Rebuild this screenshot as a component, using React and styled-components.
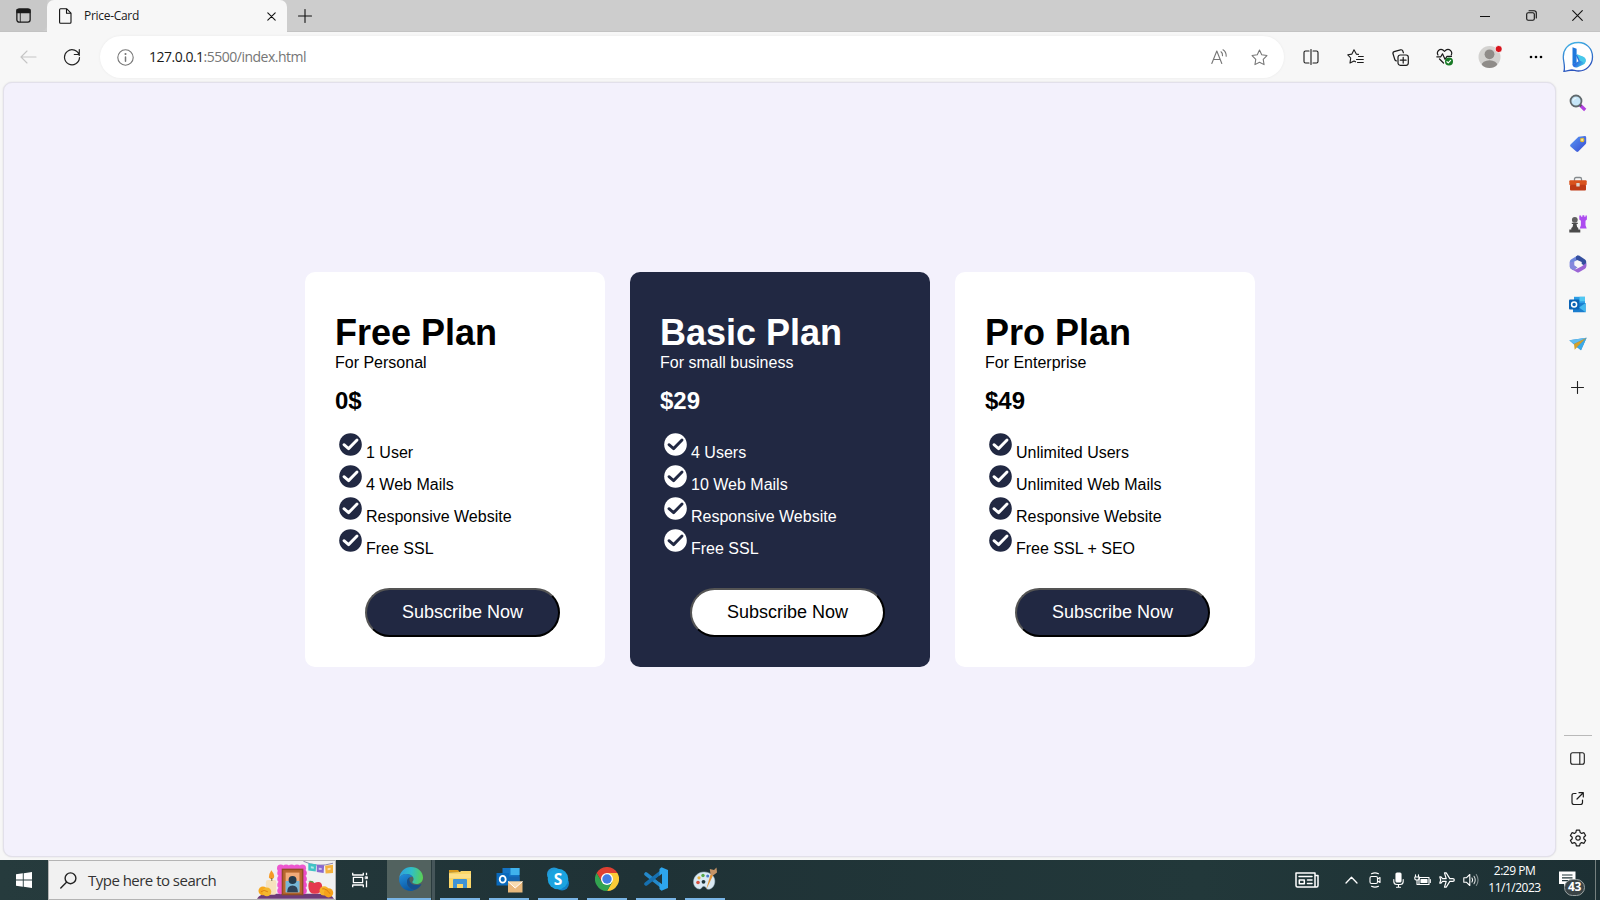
import React from 'react';
import styled, { createGlobalStyle } from 'styled-components';

const NAVY = '#212842';
const UI = '"Open Sans", "Noto Sans", sans-serif';

const GlobalStyle = createGlobalStyle`
  * { box-sizing: border-box; margin: 0; padding: 0; }
  body { overflow: hidden; background: #f7f7f7; font-family: "Liberation Sans", Arial, sans-serif; }
  svg { display: block; flex: none; }
`;

const Screen = styled.div`
  width: 1600px;
  height: 900px;
  display: flex;
  flex-direction: column;
  background: #f7f7f7;
`;

/* ---------- browser chrome ---------- */
const TabStrip = styled.header`
  height: 32px;
  display: flex;
  background: #cdcdcd;
  border-bottom: 1px solid #c3c3c3;
`;
const Workspace = styled.div`
  width: 47px;
  display: flex;
  align-items: center;
  justify-content: center;
  background: #c8c8c8;
  border-bottom-right-radius: 6px;
`;
const Tab = styled.div`
  width: 240px;
  height: 32px;
  padding: 0 10px 0 12px;
  display: flex;
  align-items: center;
  background: #f7f7f7;
  border-radius: 7px 7px 0 0;
  font: 12px/16px ${UI};
  color: #1a1a1a;
`;
const TabTitle = styled.span`
  flex: 1;
  margin-left: 12px;
  letter-spacing: -0.3px;
`;
const NewTab = styled.div`
  width: 35px;
  display: flex;
  align-items: center;
  justify-content: center;
`;
const WindowControls = styled.div`
  margin-left: auto;
  display: flex;
`;
const Slot = styled.div`
  width: ${(p) => p.$w || 24}px;
  flex: none;
  display: flex;
  align-items: center;
  justify-content: center;
`;
const Toolbar = styled.nav`
  height: 50px;
  padding-left: 6px;
  display: flex;
  align-items: center;
`;
const AddressBar = styled.div`
  width: 1184px;
  height: 42px;
  margin: 0 5px 0 6px;
  padding: 0 5px 0 14px;
  display: flex;
  align-items: center;
  background: #fff;
  border-radius: 21px;
  box-shadow: 0 0 3px rgba(0, 0, 0, 0.06);
`;
const Url = styled.span`
  flex: 1;
  margin-left: 12px;
  font: 14px/20px ${UI};
  letter-spacing: -0.5px;
  color: #767676;
  b { font-weight: 400; color: #1a1a1a; }
`;
const Main = styled.div`
  height: 778px;
  display: flex;
`;
const Page = styled.main`
  width: 1553px;
  height: 775px;
  margin-left: 3px;
  padding-left: 1px;
  display: flex;
  align-items: center;
  justify-content: center;
  gap: 25px;
  background: #f3f1fc;
  border: 1px solid #e2e0ea;
  border-radius: 9px;
  box-shadow: 0 0 2px rgba(0, 0, 0, 0.12);
`;
const Sidebar = styled.aside`
  width: 44px;
  padding: 1px 1px 2px 0;
  display: flex;
  flex-direction: column;
  align-items: center;
`;
const SideItem = styled.div`
  height: ${(p) => p.$h || 40}px;
  display: flex;
  align-items: center;
`;
const SideSpacer = styled.div`
  flex: 1;
`;
const SideRule = styled.div`
  width: 28px;
  height: 1px;
  margin-bottom: 2px;
  background: #b9b9b9;
`;

/* ---------- pricing cards ---------- */
const Card = styled.section`
  width: 300px;
  height: 395px;
  padding: 40px 30px 30px;
  border-radius: 10px;
  background: ${(p) => (p.$dark ? NAVY : '#fff')};
  color: ${(p) => (p.$dark ? '#fff' : '#000')};
`;
const PlanName = styled.h1`
  font-size: 36px;
  line-height: 42px;
  white-space: nowrap;
`;
const Audience = styled.p`
  font-size: 16px;
  line-height: 18px;
`;
const Price = styled.h2`
  margin: 15px 0;
  font-size: 24px;
  line-height: 28px;
`;
const Features = styled.ul`
  list-style: none;
`;
const Feature = styled.li`
  height: 32px;
  padding-left: 4px;
  display: flex;
  gap: 4px;
  font-size: 16px;
  line-height: 18px;
  span { padding-top: 14px; }
  svg { margin-top: 3px; }
`;
const Subscribe = styled.button`
  display: block;
  width: 195px;
  height: 49px;
  margin: 30px 0 0 30px;
  border: 2px outset #000;
  border-radius: 25px;
  background: ${(p) => (p.$dark ? '#fff' : NAVY)};
  color: ${(p) => (p.$dark ? '#000' : '#fff')};
  font: 18px "Liberation Sans", Arial, sans-serif;
`;

/* ---------- taskbar ---------- */
const Taskbar = styled.footer`
  height: 40px;
  display: flex;
  background: linear-gradient(90deg, #263b3d, #1f3236 40%, #22383a 75%, #1d3034);
`;
const SearchBox = styled.div`
  width: 288px;
  padding-left: 11px;
  display: flex;
  align-items: center;
  background: #f1f1f1;
  border: 1px solid #b4b4b4;
  font: 15px/20px ${UI};
  letter-spacing: -0.52px;
  color: #333;
`;
const SearchText = styled.span`
  flex: 1;
  margin-left: 11px;
`;
const TaskView = styled.div`
  width: 51px;
  padding-left: 16px;
  display: flex;
  align-items: center;
`;
const TaskbarApp = styled.div`
  width: ${(p) => (p.$active ? 44 : 40)}px;
  margin-right: ${(p) => (p.$active ? 0 : 9)}px;
  padding-left: ${(p) => (p.$active ? 3 : 0)}px;
  display: flex;
  align-items: center;
  justify-content: center;
  background: ${(p) => (p.$active ? '#52625f' : 'transparent')};
  border-bottom: 2px solid #79b5e6;
`;
const Stacked = styled.div`
  width: 4px;
  margin-right: 5px;
  background: #46565a;
  border-left: 1px solid #2a3b3e;
`;
const Tray = styled.div`
  margin-left: auto;
  display: flex;
`;
const TrayGap = styled.div`
  width: 15px;
`;
const Clock = styled.div`
  width: 64px;
  padding: 2px 1px 0 0;
  text-align: center;
  font: 12px/17px ${UI};
  letter-spacing: -0.5px;
  color: #fff;
  white-space: nowrap;
`;
const Notice = styled.div`
  position: relative;
  width: 48px;
  padding: 11px 0 0 12px;
`;
const Badge = styled.span`
  position: absolute;
  left: 17px;
  top: 19px;
  width: 21px;
  height: 17px;
  border: 1px solid #9aa3a3;
  border-radius: 9px;
  background: #3b4446;
  color: #fff;
  font: 700 12px/14px ${UI};
  letter-spacing: -0.4px;
  text-align: center;
`;
const ShowDesktop = styled.div`
  width: 5px;
  border-left: 1px solid #75807f;
`;

/* ---------- drawings ---------- */
const Icon = ({ w = 16, h = w, box, c = '#1b1b1b', sw = 1.1, children }) => (
  <svg width={w} height={h} viewBox={box || `0 0 ${w} ${h}`} fill="none" stroke={c} strokeWidth={sw}
    strokeLinecap="round" strokeLinejoin="round">{children}</svg>
);

const CheckIcon = ({ dark }) => (
  <svg width="23" height="23" viewBox="0 0 24 24">
    <circle cx="12" cy="12" r="11.8" fill={dark ? '#fff' : NAVY} />
    <path d="M5.2 12.2l4.8 4.1 8.800-8.900" fill="none" stroke={dark ? NAVY : '#fff'} strokeWidth="3" strokeLinecap="round" strokeLinejoin="round" />
  </svg>
);

const BingIcon = () => (
  <svg width="32" height="32" viewBox="0 0 32 32">
    <defs>
      <linearGradient id="ring" x1="0" y1="0" x2="0.3" y2="1"><stop stopColor="#43b8e8" /><stop offset="1" stopColor="#2a52bd" /></linearGradient>
      <linearGradient id="bee" x1="0" y1="0" x2="1" y2="0.6"><stop stopColor="#1f7fe0" /><stop offset=".5" stopColor="#2b6ee0" /><stop offset="1" stopColor="#43c9e8" /></linearGradient>
    </defs>
    <path d="M2 30.300C3 27 2.300 23.500 1.700 20C-.4 9 6 1.500 16.500 1.500c8 0 14 6.300 14 14.300S24.500 30 16.500 30c-2.700 0-4.600-.9-6.500-1C7 29 5 30.300 2 30.300Z" fill="#fff" stroke="url(#ring)" strokeWidth="1.300" />
    <path d="M10.500 6.200l4.100 1.600v13.800l-4.100 2.400Z" fill="#1e78dc" />
    <path d="M10.500 23.500l6-3.300-2-4.500-1-2.200 7.500 2.600c4.300 2 3 6.200.5 7.500l-6.500 2.800c-2 .7-4.500-.8-4.500-2.900Z" fill="url(#bee)" />
    <path d="M14.600 13l6.800 2.800c3.300 1.800 2.600 5 .6 6.900-.7-1.700-2.400-2.300-4.200-3.200Z" fill="#48c8ea" />
  </svg>
);

const MagnifierColor = () => (
  <svg width="18" height="18" viewBox="0 0 18 18">
    <path d="M11 11l5.200 5" stroke="#b13fe0" strokeWidth="3.200" strokeLinecap="butt" />
    <path d="M10 10l2.300 2.200" stroke="#555" strokeWidth="2" />
    <circle cx="7" cy="7" r="5.500" fill="#c6e6f8" stroke="#60696d" strokeWidth="1.800" />
    <path d="M4.300 6.500c.4-1.500 1.500-2.300 3-2.300" stroke="#fff" fill="none" />
  </svg>
);
const TagIcon = () => (
  <svg width="18" height="18" viewBox="0 0 18 18">
    <defs><linearGradient id="tag" x1="0" y1="0" x2="1" y2="1"><stop stopColor="#5b9bf5" /><stop offset="1" stopColor="#3648d0" /></linearGradient></defs>
    <path d="M9.500 1.800 15.800 1q1.400 0 1.400 1.400v5.200q0 .8-.5 1.300l-7.400 7.700q-1 .9-2 0L1.500 11.500q-.9-1 0-2Z" fill="url(#tag)" />
    <circle cx="13.200" cy="5" r="1.700" fill="#f4e5a0" stroke="#e5ba28" strokeWidth="1.100" />
  </svg>
);
const ToolboxIcon = () => (
  <svg width="18" height="16" viewBox="0 0 18 16">
    <path d="M5.500 5V3q0-1.500 1.500-1.500h4q1.500 0 1.500 1.500v2" fill="none" stroke="#858b8e" strokeWidth="1.300" />
    <rect x=".3" y="4.300" width="17.400" height="5" rx="1" fill="#d9531e" />
    <rect x="1" y="8.700" width="16" height="5.800" rx="1" fill="#bf3b16" />
    <rect x="7.300" y="7" width="3.400" height="3.600" rx=".5" fill="#dcd6d0" />
  </svg>
);
const ChessIcon = () => (
  <svg width="18" height="18" viewBox="0 0 18 18">
    <path d="M10.300.5h1.800v1.300h1.300V.2h1.900v1.600h1.200V.500h1.400v4l-1.400 1.200v4.600l1.200 3.200h-7l1.200-3.200V5.700l-1.600-1.200Z" fill="#ad4cf0" />
    <circle cx="5.800" cy="4.800" r="2.900" fill="#606060" />
    <path d="M2.800 7.700h6v1.200H7.500q.2 3.200 1.800 4.200v1.500h2v2.900H.3v-2.900h2v-1.500Q4 11.900 4.200 8.900H2.800Z" fill="#4a4a4a" />
  </svg>
);
const M365Icon = () => (
  <svg width="18" height="18" viewBox="0 0 18 18">
    <path d="M8.500.5 2 4.400Q.8 5.200.8 6.600v5.200q0 1.400 1.200 2l2.600 1.400V7L9 4.800V.6Z" fill="#6f87dc" />
    <path d="M8.500.5 10 .6l6 3.800q1.200.8 1.200 2.200v4.800l-4.500-2.300V7L7 4.500V1.400Z" fill="#344f9e" />
    <path d="M2 13.800l6 3.400q1 .5 2 0l6-3.500q1.200-.7 1.200-2.100V8l-4.300 3.200L7 14.300Z" fill="#9b65d5" />
    <path d="M.8 7v4.600q0 1.500 1.200 2.200l2.600 1.400 3.900-2.600-3.200-2.300V7Z" fill="#8487dc" />
    <path d="M9 5.900l2.900 1.500v3.200L9 12.300l-2.900-1.700V7.400Z" fill="#f7f7f7" />
  </svg>
);
const OutlookSmall = () => (
  <svg width="17" height="17" viewBox="0 0 17 17">
    <rect x="5" y=".8" width="11" height="9" fill="#2b9de5" /><rect x="10.500" y=".8" width="5.500" height="4.500" fill="#50c8f2" />
    <path d="M4 7.500 16.600 7v9.200H4Z" fill="#1a7dce" /><path d="M16.600 7v9.200L10 11.500Z" fill="#43b9ee" />
    <rect x="0" y="3.500" width="10.300" height="10" rx="1" fill="#0b63b5" />
    <circle cx="5.100" cy="8.500" r="2.500" fill="none" stroke="#fff" strokeWidth="1.500" />
  </svg>
);
const PlaneColor = () => (
  <svg width="18" height="14" viewBox="0 0 18 14">
    <path d="M.3 3.200 17.600.8 12 13.200 8.300 10.500Z" fill="#2e88cc" />
    <path d="M.3 3.200 17.600.8 5 7Z" fill="#62bdf0" />
    <path d="M5 7 17.600.8 8.300 10 5.700 12.700Z" fill="#d5a02a" />
    <path d="M8.300 10 17.600.8 12 13.200Z" fill="#3caae8" />
  </svg>
);

const DayArt = () => (
  <svg width="78" height="38" viewBox="0 0 79 38">
    <path d="M0 38q3-5 11-5h55q9 0 12 5Z" fill="#6d3b78" />
    <path d="M47 0q14 7 30 2" stroke="#8f86ae" fill="none" />
    <path d="M52 2l8 1-.5 7.500-7.500-1Z" fill="#41c3c5" /><path d="M60.500 3.500l7.500.5-.5 8-7-1Z" fill="#8a69ce" /><path d="M69 4.500l8-1v8.500l-7.500.5Z" fill="#f5b23e" />
    <path d="M54.500 5l3 .5v2l-3-.5ZM62.500 6.500l3 .3v2l-3-.3ZM71.500 7l3-.3v2l-3 .3Z" fill="#fff" opacity=".6" />
    {[24, 29.500, 35, 40.500, 46].map((x) => <circle key={x} cx={x} cy="7" r="3.700" fill="#ed57cf" />)}
    {[12, 18, 24, 30].map((y) => <g key={y}><circle cx="24" cy={y} r="3.500" fill="#ef58d0" /><circle cx="47" cy={y} r="3.500" fill="#e94ac5" /></g>)}
    <rect x="25" y="7.500" width="22" height="27" fill="#914e24" /><rect x="26.500" y="9" width="19" height="24" fill="#b8682f" />
    <rect x="29" y="11.500" width="14" height="20" fill="#f2aa79" /><path d="M29 20h14v11.500H29Z" fill="#77b7d8" />
    <circle cx="36" cy="19" r="4" fill="#253b4c" /><path d="M30.500 31.500q0-7 5.500-7t5.500 7Z" fill="#2e4358" />
    <path d="M14.500 9q4 5 2.500 8-2.500 2.500-5-.5Q12 12.500 14.500 9Z" fill="#f69b26" />
    <rect x="9" y="19" width="10.500" height="15" rx="2" fill="#f6e2bd" /><path d="M15 17v3" stroke="#664" />
    <circle cx="6" cy="30" r="4.500" fill="#f6a81d" /><circle cx="10" cy="31" r="4.500" fill="#f4b72d" /><path d="M4 31q3-3 7 0" stroke="#dc8112" fill="none" />
    <path d="M58 22q-6-4-6 3 0 8 6.500 8 7.500 0 7.500-7 0-7-8-4Z" fill="#e4394d" /><path d="M58 22q-5-1-6-2 5-1 6 2" fill="#5b9b42" />
    <circle cx="68" cy="30" r="4.700" fill="#f6b32a" /><circle cx="72.500" cy="32" r="4.700" fill="#f6a11b" /><path d="M66 28q4-1 8 5" stroke="#d87c10" fill="none" />
  </svg>
);

const EdgeIcon = () => (
  <svg width="24" height="24" viewBox="0 0 24 24">
    <defs>
      <linearGradient id="eTop" x1="0" y1=".4" x2="1" y2=".5"><stop stopColor="#2f9fdf" /><stop offset=".5" stopColor="#30bfc7" /><stop offset="1" stopColor="#5ad153" /></linearGradient>
      <linearGradient id="eLow" x1="0" y1="0" x2="0.4" y2="1"><stop stopColor="#2390dd" /><stop offset="1" stopColor="#0c59a4" /></linearGradient>
    </defs>
    <path d="M.2 11C1 4.500 6 0 12 0c7 0 12 5 12 10.500 0 4.200-3 6.500-6.300 6.500-3.200 0-4.300-1.100-4.300-1.900 0-.7 1.200-1.200 1.200-3.100C14.600 9 11 6.900 7.500 6.900 4.300 6.900 1.500 8.500.2 11Z" fill="url(#eTop)" />
    <path d="M.1 12C.5 9 3.500 6.900 7.300 6.900c3.200 0 5.700 1.400 6.700 3.100-1.400-.6-6 .3-6 5.200 0 4.400 4.500 7.300 7.500 7.700-1.100.7-2.300 1.100-3.500 1.100C5 24 0 18.500.1 12Z" fill="url(#eLow)" />
    <path d="M10.800 10c-2 1-2.900 3.300-2.800 5.200.2 4 4.300 7.600 7.500 7.700 2.800-.8 5.200-2.700 6.700-5.200.3-.5 0-.7-.4-.5-4.500 2-9.500.6-11-2.700-.6-1.500-.5-3.300 0-4.500Z" fill="#164f8e" />
  </svg>
);
const FolderIcon = () => (
  <svg width="22" height="20" viewBox="0 0 22 20">
    <path d="M0 1h9l2 2.500H0Z" fill="#d99a1c" /><path d="M0 3.500 11 3l1-1h10v17H0Z" fill="#fbd668" /><path d="M0 5h22v4H0Z" fill="#fde087" />
    <path d="M4 19v-8q0-1 1-1h12q1 0 1 1v8h-4v-4H8v4Z" fill="#3f93d5" />
  </svg>
);
const OutlookBig = () => (
  <svg width="27" height="27" viewBox="-.5 -1.500 27 27">
    <rect x="6" y=".5" width="17" height="15" fill="#1474c5" /><rect x="14" y=".5" width="9" height="7" fill="#40b3ed" /><path d="M6 9h17v7H6Z" fill="#1565b0" />
    <rect x="0" y="5.500" width="12.500" height="12.500" fill="#0969bc" /><ellipse cx="6.200" cy="11.800" rx="3" ry="3.400" fill="none" stroke="#fff" strokeWidth="1.800" />
    <path d="M11.500 14H26v11H11.500Z" fill="#e9b87c" /><path d="M11.500 14 18.700 20.500 26 14Z" fill="#f7dbb0" /><path d="M11.500 14l7.200 6.500L26 14" fill="none" stroke="#fff" />
  </svg>
);
const SkypeIcon = () => (
  <svg width="24" height="24" viewBox="0 0 24 24">
    <circle cx="8" cy="7.500" r="7" fill="#2298d6" /><circle cx="16" cy="16.500" r="7" fill="#1282c7" /><circle cx="12" cy="12" r="10.300" fill="#1ba3df" />
    <text x="11.900" y="17.500" textAnchor="middle" fill="#fff" fontFamily="Open Sans, sans-serif" fontSize="15.500" fontWeight="700">S</text>
  </svg>
);
const ChromeIcon = () => (
  <svg width="24" height="24" viewBox="0 0 24 24">
    <path d="M1.600 6A12 12 0 0 1 22.400 6H12L6.800 15Z" fill="#de4032" />
    <path d="M22.400 6A12 12 0 0 1 12 24l5.200-9L12 6Z" fill="#fbcb36" />
    <path d="M1.600 6A12 12 0 0 0 12 24l5.200-9H6.800Z" fill="#32a350" />
    <circle cx="12" cy="12" r="6" fill="#fff" /><circle cx="12" cy="12" r="4.700" fill="#417de5" />
  </svg>
);
const CodeIcon = () => (
  <svg width="24" height="24" viewBox="0 0 24 24">
    <path d="M2 7 18 19.500" stroke="#2489ca" strokeWidth="3.600" strokeLinecap="round" /><path d="M2 17 18 4.500" stroke="#1670b0" strokeWidth="3.600" strokeLinecap="round" />
    <path d="M17.500.3 24 3v18l-6.500 2.700L15.500 22V2Z" fill="#2da5ed" /><path d="M18 6.700v10.600L11.300 12Z" fill="#20343a" />
  </svg>
);
const PaintIcon = () => (
  <svg width="24" height="24" viewBox="0 0 24 24">
    <path d="M11 5C5 5 .5 9.500.5 15c0 4 3 7 6 7 2.500 0 2-2.800 4.500-2.800 2 0 2.200 3.500 5 3 3.500-.5 6-4.300 5.800-8.500C21.500 8.500 17 5 11 5Z" fill="#d9e9f3" stroke="#a7bfce" strokeWidth=".5" />
    <circle cx="10.500" cy="14.800" r="1.900" fill="#1f3438" /><circle cx="5" cy="15.500" r="1.800" fill="#d65142" /><circle cx="6" cy="10.800" r="1.600" fill="#e8b13d" /><circle cx="10" cy="8.500" r="1.700" fill="#56a84b" /><circle cx="14.700" cy="9" r="1.500" fill="#4778ca" />
    <path d="M13 23 17.500 7.500l2.500 1Z" fill="#e39336" /><path d="M17.500 7.500 16.800 2l4.200 1L23.500.5l.5 5-4 3Z" fill="#c49366" />
  </svg>
);

const plans = [
  { name: 'Free Plan', audience: 'For Personal', price: '0$', features: ['1 User', '4 Web Mails', 'Responsive Website', 'Free SSL'] },
  { name: 'Basic Plan', audience: 'For small business', price: '$29', dark: true, features: ['4 Users', '10 Web Mails', 'Responsive Website', 'Free SSL'] },
  { name: 'Pro Plan', audience: 'For Enterprise', price: '$49', features: ['Unlimited Users', 'Unlimited Web Mails', 'Responsive Website', 'Free SSL + SEO'] },
];

const PlanCard = ({ plan }) => (
  <Card $dark={plan.dark}>
    <PlanName>{plan.name}</PlanName>
    <Audience>{plan.audience}</Audience>
    <Price>{plan.price}</Price>
    <Features>
      {plan.features.map((f) => <Feature key={f}><CheckIcon dark={plan.dark} /><span>{f}</span></Feature>)}
    </Features>
    <Subscribe $dark={plan.dark}>Subscribe Now</Subscribe>
  </Card>
);

const Tabs = () => (
  <TabStrip>
    <Workspace>
      <Icon w={15} box="0 0 14 14" sw={1.200}><rect x=".8" y=".8" width="12.400" height="12.400" rx="2.200" /><path d="M1 1.500h12v2.700H1Z" fill="#1b1b1b" /><path d="M4 5v8" strokeWidth=".8" /></Icon>
    </Workspace>
    <Tab>
      <Icon w={13} h={16} c="#111"><path d="M1.500.7h6l4.500 4.500v9q0 1-1 1h-9.500q-.9 0-.9-1V1.700q0-1 .9-1ZM7.500.8v4.400H12" /></Icon>
      <TabTitle>Price-Card</TabTitle>
      <Slot $w={12}><Icon w={9} c="#111"><path d="M.8.800l7.400 7.400M8.200.8.800 8.200" /></Icon></Slot>
    </Tab>
    <NewTab><Icon w={14} c="#111"><path d="M7 .5v13M.5 7h13" /></Icon></NewTab>
    <WindowControls>
      <Slot $w={46}><Icon w={10} c="#111" sw={1}><path d="M0 5.500h10" /></Icon></Slot>
      <Slot $w={46}><Icon w={11} c="#111"><rect x=".7" y="2.700" width="7.600" height="7.600" rx="1.500" /><path d="M3 .7h5q2.300 0 2.300 2.300v5" /></Icon></Slot>
      <Slot $w={46}><Icon w={11} c="#111"><path d="M.7.700l9.600 9.600M10.300.7.700 10.300" /></Icon></Slot>
    </WindowControls>
  </TabStrip>
);

const STAR = 'M8 1l2.100 4.500 4.900.7-3.500 3.500.8 5L8 12.400l-4.300 2.300.8-5L1 6.200l4.900-.7Z';

const Tools = () => (
  <Toolbar>
    <Slot $w={44}><Icon w={17} h={14} c="#c5c5c5"><path d="M16 7H1M7 1 1 7l6 6" /></Icon></Slot>
    <Slot $w={44}><Icon w={18} c="#222" sw={1.200}><path d="M16.300 7.500A7.500 7.500 0 1 0 16.500 9.500M16.300 1.500v5h-5" /></Icon></Slot>
    <AddressBar>
      <Slot $w={23}><Icon w={17} c="#767676"><circle cx="8.500" cy="8.500" r="7.700" /><path d="M8.500 8v4.200" strokeWidth="1.500" /><circle cx="8.500" cy="5" r=".5" fill="#767676" /></Icon></Slot>
      <Url><b>127.0.0.1</b>:5500/index.html</Url>
      <Slot $w={40}><Icon w={16} c="#767676"><path d="M.8 14.500 5.800 2l5 12.500M2.500 10.500h6.600M10 2.800q1.800 1.200 1.500 4M12 .8q3.300 2 3.200 6.500" /></Icon></Slot>
      <Slot $w={40}><Icon w={17} box="0 0 16 16" c="#767676" sw={1}><path d={STAR} /></Icon></Slot>
    </AddressBar>
    <Slot $w={44}><Icon w={16}><path d="M6 2H2.500Q1 2 1 3.500v9Q1 14 2.500 14H6M10 2h3.500Q15 2 15 3.500v9q0 1.500-1.500 1.500H10M8 .5v15" /></Icon></Slot>
    <Slot $w={45}><Icon w={17} h={16}><path d="M11.500 5.400 9.300 5.100 7 .8 4.900 5.100.8 5.800 3.700 9l-.7 5 4-2 1.500.8M11.500 7.500h4.800M9.500 10.500h6.800M10.500 13.500h5.800" /></Icon></Slot>
    <Slot $w={44}><Icon w={17} sw={1.200}><rect x="6" y="6" width="10.300" height="10.300" rx="2.200" /><path d="M11.200 8.300v5.800M8.300 11.200h5.800M4.300 11.800q-1.200-.2-1.500-1.300L1 4.800q-.4-1.600 1.100-2.200L8.500.8q1.500-.3 2.200 1l.7 2" /></Icon></Slot>
    <Slot $w={45}><svg width="18" height="18" viewBox="0 0 18 18" fill="none" stroke="#1b1b1b" strokeWidth="1.200" strokeLinecap="round" strokeLinejoin="round"><path d="M2 7Q.5 4.500 2.500 2.500q3-2.500 6 .8 3-3.300 6-.8 2 1.800.8 4.500M.8 8.800h4l1.700-3 2.500 5.500 2-3h4.500M3.500 11l4 4" /><circle cx="13" cy="13.500" r="4" fill="#187a26" stroke="none" /><path d="M11 13.700l1.300 1.200 2.300-2.500" stroke="#fff" /></svg></Slot>
    <Slot $w={46}><svg width="24" height="24" viewBox="0 0 24 24"><defs><clipPath id="av"><circle cx="11.500" cy="12" r="11" /></clipPath></defs><circle cx="11.500" cy="12" r="11" fill="#d3d2d0" /><g clipPath="url(#av)"><circle cx="11.500" cy="9.300" r="4.900" fill="#8f8c89" /><ellipse cx="11.500" cy="20.500" rx="8" ry="5.200" fill="#8f8c89" /></g><circle cx="20.700" cy="4" r="3.600" fill="#d8131c" stroke="#f7f7f7" strokeWidth=".9" /></svg></Slot>
    <Slot $w={46}><svg width="14" height="4"><circle cx="2" cy="2" r="1.300" /><circle cx="7" cy="2" r="1.300" /><circle cx="12" cy="2" r="1.300" /></svg></Slot>
    <Slot $w={38}><BingIcon /></Slot>
  </Toolbar>
);

export default function App() {
  return (
    <Screen>
      <GlobalStyle />
      <Tabs />
      <Tools />
      <Main>
        <Page>{plans.map((p) => <PlanCard key={p.name} plan={p} />)}</Page>
        <Sidebar>
          <SideItem><MagnifierColor /></SideItem>
          <SideItem $h={41}><TagIcon /></SideItem>
          <SideItem><ToolboxIcon /></SideItem>
          <SideItem><ChessIcon /></SideItem>
          <SideItem><M365Icon /></SideItem>
          <SideItem><OutlookSmall /></SideItem>
          <SideItem><PlaneColor /></SideItem>
          <SideItem $h={46}><Icon w={13} c="#222"><path d="M6.500.5v12M.5 6.500h12" /></Icon></SideItem>
          <SideSpacer />
          <SideRule />
          <SideItem><Icon w={15} h={13}><rect x=".7" y=".7" width="13.600" height="11.600" rx="2" /><path d="M9.800 1v11" /></Icon></SideItem>
          <SideItem><Icon w={13} sw={1.200}><path d="M5 1.500H3Q1 1.500 1 3.500v7q0 2 2 2h6.500q2 0 2-2V8M8 .7h4.300V5M12 1 6 7" /></Icon></SideItem>
          <SideItem><Icon w={18} sw={1.200}><circle cx="9" cy="9" r="2.200" /><path d="M7.400 1.200h3.200l.6 2.400 1.400.8 2.400-.7 1.600 2.800-1.800 1.700v1.600l1.800 1.700-1.600 2.800-2.400-.7-1.400.8-.6 2.400H7.400l-.6-2.400-1.400-.8-2.400.7-1.600-2.800 1.800-1.700V8.200L1.400 6.500 3 3.700l2.400.7 1.400-.8Z" /></Icon></SideItem>
        </Sidebar>
      </Main>
      <Taskbar>
        <Slot $w={48}><svg width="16" height="16" viewBox="0 0 16 16" fill="#fff"><path d="M0 2.300 6.800 1.300v6.300H0ZM7.700 1.200 16 0v7.600H7.700ZM0 8.500h6.800v6.300L0 13.800ZM7.700 8.500H16V16l-8.300-1.200Z" /></svg></Slot>
        <SearchBox>
          <Icon w={17} c="#222" sw={1.400}><circle cx="10.500" cy="6.300" r="5.400" /><path d="M6.500 10.300.8 16" /></Icon>
          <SearchText>Type here to search</SearchText>
          <DayArt />
        </SearchBox>
        <TaskView>
          <Icon w={16} c="#fff" sw={1.300}><path d="M.7.700v2.300h10.600V.700M.7 15.300V13h10.600v2.300M1.400 5.300h9.200v5.400H1.400ZM14.500.7v2.500M14.500 8.500v6.800" strokeLinecap="butt" /><rect x="13.500" y="4.700" width="2" height="2" fill="#fff" stroke="#fff" strokeWidth=".7" /></Icon>
        </TaskView>
        <TaskbarApp $active><EdgeIcon /></TaskbarApp>
        <Stacked />
        <TaskbarApp><FolderIcon /></TaskbarApp>
        <TaskbarApp><OutlookBig /></TaskbarApp>
        <TaskbarApp><SkypeIcon /></TaskbarApp>
        <TaskbarApp><ChromeIcon /></TaskbarApp>
        <TaskbarApp><CodeIcon /></TaskbarApp>
        <TaskbarApp><PaintIcon /></TaskbarApp>
        <Tray>
          <Slot $w={34}><Icon w={24} h={16} c="#fff" sw={1.500}><path d="M1 1h19v14H2.500Q1 15 1 13.500ZM20 3.500h3v10q0 1.500-1.500 1.500H19M4 4.500h13M12.500 8H17M12.500 11.500H17M4.300 8h5v3.700h-5Z" /></Icon></Slot>
          <TrayGap />
          <Slot><Icon w={13} h={8} c="#fff" sw={1.300}><path d="M1 7l5.500-5.800L12 7" /></Icon></Slot>
          <Slot><Icon w={12} h={16} c="#fff"><rect x="1" y="4.500" width="7.500" height="7" rx="1.500" /><path d="M8.500 7l2.500-1.500v5L8.500 9M2.500 1.700Q6 0 9.500 1.700M2.500 14.300Q6 16 9.500 14.300" /></Icon></Slot>
          <Slot $w={22}><Icon w={11} h={16} c="#fff"><rect x="3" y="1" width="5" height="9" rx="1" fill="#fff" /><path d="M.8 7.500v2q0 3 3 3h3.400q3 0 3-3v-2M5.500 12.500v2.800M3.500 15.300h4" /></Icon></Slot>
          <Slot $w={26}><Icon w={17} h={12} c="#fff"><rect x="5" y="3.500" width="10" height="7" /><path d="M7 5.500h6v3H7Z" fill="#fff" /><path d="M16.300 5.500v3M1.500.8v2M4.500.8v2M.8 3h4.500v1.500q0 1.500-2.300 1.500Q.8 6 .8 4.500ZM3 6v4.500h2" /></Icon></Slot>
          <Slot><Icon w={16} c="#fff" sw={1.200}><path d="M15.300 8q0-1.400-1.500-1.400h-3L7.200.8H5.500l1.700 5.800H3.500L2 4.800H.8L1.700 8l-.9 3.200H2l1.500-1.800h3.700l-1.700 5.800h1.700l3.600-5.800h3q1.500 0 1.500-1.400Z" /></Icon></Slot>
          <Slot><Icon w={17} h={14} c="#fff"><path d="M.8 4.800h2.500L6.800 1.500v11L3.300 9.200H.8ZM9 5q1.300 2 0 4" /><path d="M11 3.300q2.500 3.700 0 7.400" opacity=".8" /><path d="M13.300 1.500q3.500 5.500 0 11" opacity=".45" /></Icon></Slot>
          <Clock>2:29 PM<br />11/1/2023</Clock>
          <Notice>
            <svg width="17" height="17" viewBox="0 0 17 17"><path d="M0 .5h16.500V13H8l-3 3v-3H0Z" fill="#fff" /><path d="M3 4h10.500M3 6.800h10.500M3 9.600h6" stroke="#22373a" strokeWidth="1.200" /></svg>
            <Badge>43</Badge>
          </Notice>
          <ShowDesktop />
        </Tray>
      </Taskbar>
    </Screen>
  );
}
